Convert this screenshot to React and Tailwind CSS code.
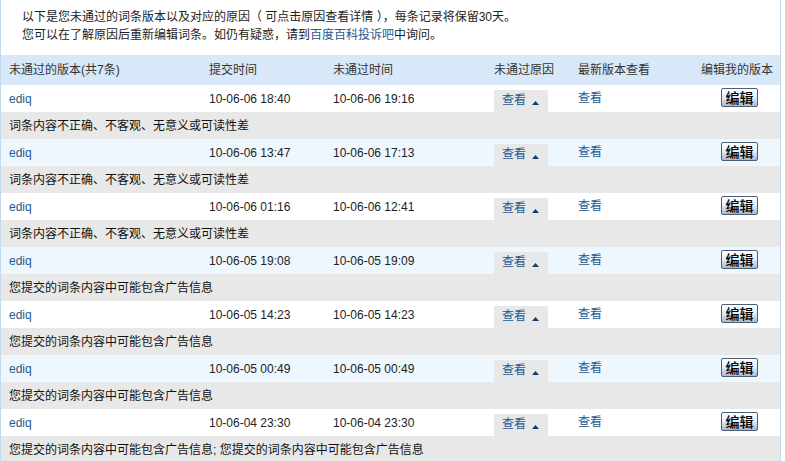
import React from "react";

const rows = [
  { sub: "10-06-06 18:40", rej: "10-06-06 19:16", reason: "词条内容不正确、不客观、无意义或可读性差" },
  { sub: "10-06-06 13:47", rej: "10-06-06 17:13", reason: "词条内容不正确、不客观、无意义或可读性差" },
  { sub: "10-06-06 01:16", rej: "10-06-06 12:41", reason: "词条内容不正确、不客观、无意义或可读性差" },
  { sub: "10-06-05 19:08", rej: "10-06-05 19:09", reason: "您提交的词条内容中可能包含广告信息" },
  { sub: "10-06-05 14:23", rej: "10-06-05 14:23", reason: "您提交的词条内容中可能包含广告信息" },
  { sub: "10-06-05 00:49", rej: "10-06-05 00:49", reason: "您提交的词条内容中可能包含广告信息" },
  { sub: "10-06-04 23:30", rej: "10-06-04 23:30", reason: "您提交的词条内容中可能包含广告信息; 您提交的词条内容中可能包含广告信息" },
];

function Caret() {
  return (
    <svg width="7" height="4" viewBox="0 0 7 4" className="ml-[6px] mt-[10px] shrink-0">
      <polygon points="3.5,0 7,4 0,4" fill="#1a3d66" />
    </svg>
  );
}

function EditButton() {
  return (
    <button className="mt-[3px] ml-5 flex h-[19px] w-[37px] items-center justify-center rounded-[2px] border border-[#4a5e78] bg-gradient-to-b from-white via-[#e6ecf4] to-[#a8b9d0] text-[14px] font-medium leading-none text-black shadow-[inset_0_1px_0_#ffffff]">
      编辑
    </button>
  );
}

export default function App() {
  return (
    <div
      className="w-[781px] border-x border-[#c3d9ee] bg-white text-[12px] text-[#333]"
      style={{ fontFamily: '"Liberation Sans", "Noto Sans CJK SC", sans-serif' }}
    >
      <div className="pl-[21px] pt-[8px] pb-[11px] leading-[18px] text-[#222]">
        <p>以下是您未通过的词条版本以及对应的原因（ 可点击原因查看详情 ），每条记录将保留30天。</p>
        <p>
          您可以在了解原因后重新编辑词条。如仍有疑惑，请到
          <a className="text-[#24598e]">百度百科投诉吧</a>中询问。
        </p>
      </div>

      <div className="flex h-[30px] items-center bg-[#d9e8f8] pl-[8px] text-[#333]">
        <div className="w-[200px]">未通过的版本(共7条)</div>
        <div className="w-[124px]">提交时间</div>
        <div className="w-[161px]">未通过时间</div>
        <div className="w-[84px]">未通过原因</div>
        <div className="w-[123px]">最新版本查看</div>
        <div>编辑我的版本</div>
      </div>

      {rows.map((r, i) => (
        <div key={i}>
          <div className={`flex h-[27px] pl-[8px] ${i % 2 === 1 ? "bg-[#eef6fe]" : "bg-white"}`}>
            <div className="w-[200px] self-center text-[#24598e]">ediq</div>
            <div className="w-[124px] self-center text-[#222]">{r.sub}</div>
            <div className="w-[161px] self-center text-[#222]">{r.rej}</div>
            <div className="w-[84px]">
              <a className="mt-[5px] flex h-[22px] w-[54px] bg-[#e8e8e8] pl-[8px] pt-[1px] leading-[18px] text-[#24598e]">
                查看
                <Caret />
              </a>
            </div>
            <div className="w-[123px] self-center leading-[14px] pb-[2px] text-[#24598e]">查看</div>
            <div className="flex">
              <EditButton />
            </div>
          </div>
          <div className="flex h-[27px] items-center bg-[#e8e8e8] pl-[8px] text-[#111]">{r.reason}</div>
        </div>
      ))}
    </div>
  );
}
